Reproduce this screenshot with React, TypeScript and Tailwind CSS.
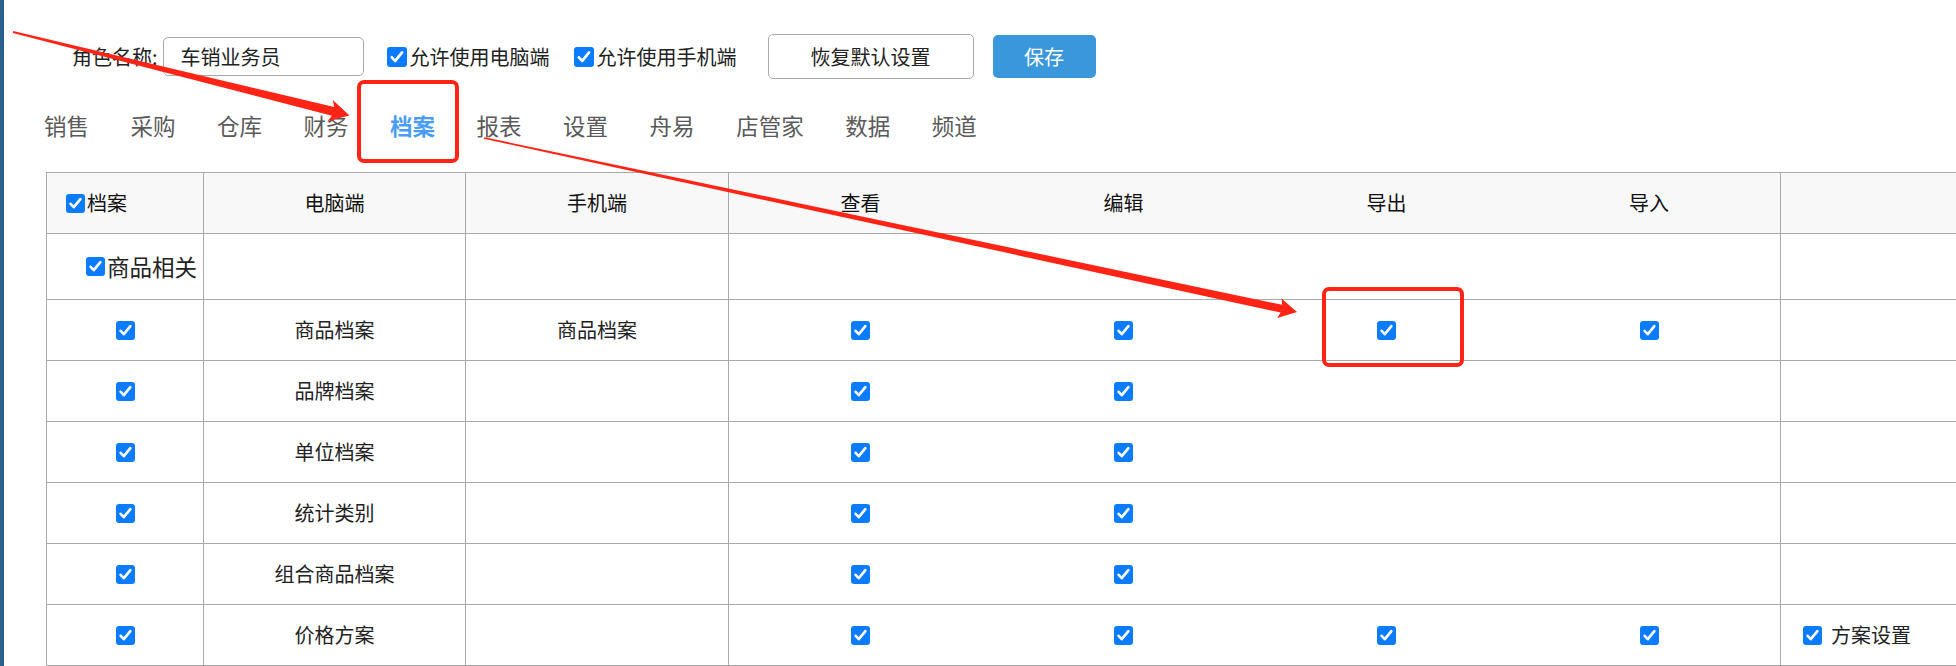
import React from 'react';

const font = "font-['Noto_Sans_CJK_SC','Microsoft_YaHei',sans-serif]";

function Check({ size = 19 }: { size?: number }) {
  return (
    <span
      className={`inline-flex shrink-0 items-center justify-center rounded-[3px] bg-[#0b7bff] ${
        size === 20 ? 'h-[20px] w-[20px]' : 'h-[19px] w-[19px]'
      }`}
    >
      <svg viewBox="0 0 19 19" className="h-full w-full" fill="none">
        <path d="M4.6 9.8 L7.8 13.2 L14.4 5.2" stroke="white" strokeWidth="2.6" strokeLinecap="round" strokeLinejoin="round" />
      </svg>
    </span>
  );
}

const tabs = ['销售', '采购', '仓库', '财务', '档案', '报表', '设置', '舟易', '店管家', '数据', '频道'];

const rows = [
  { name: '商品档案', mobile: '商品档案', exp: true, imp: true },
  { name: '品牌档案' },
  { name: '单位档案' },
  { name: '统计类别' },
  { name: '组合商品档案' },
  { name: '价格方案', exp: true, imp: true, extra: '方案设置' },
] as { name: string; mobile?: string; exp?: boolean; imp?: boolean; extra?: string }[];

const cols = 'grid grid-cols-[157px_262px_263px_263px_263px_263px_263px_260px]';

export default function App() {
  return (
    <div className={`relative flex h-[666px] w-[1956px] overflow-hidden bg-white text-[#222] ${font}`}>
      {/* left strip */}
      <div className="w-[4px] shrink-0 bg-[#2c5f8e]" />

      <div className="flex min-w-0 flex-1 flex-col">
        {/* role bar */}
        <div className="mt-[34px] flex h-[45px] items-center pl-[68px] text-[20px]">
          <span className="leading-none">角色名称:</span>
          <div className="ml-[5px] flex h-[39px] w-[201px] items-center rounded-[5px] border border-[#a9a9a9] pl-[17px]">
            车销业务员
          </div>
          <label className="ml-[23px] flex items-center gap-[3px]">
            <Check size={20} />
            <span>允许使用电脑端</span>
          </label>
          <label className="ml-[24px] flex items-center gap-[3px]">
            <Check size={20} />
            <span>允许使用手机端</span>
          </label>
          <button className="ml-[31px] flex h-[45px] w-[206px] items-center justify-center rounded-[5px] border border-[#a9a9a9] bg-white">
            恢复默认设置
          </button>
          <button className="ml-[19px] flex h-[43px] w-[103px] items-center justify-center rounded-[5px] bg-[#3a97dc] text-white">
            保存
          </button>
        </div>

        {/* module tabs */}
        <div className="mt-[24px] flex h-[46px] items-center gap-[41.5px] pl-[40px] text-[22.5px] text-[#5a5a5a]">
          {tabs.map((t) => (
            <span key={t} className={t === '档案' ? 'font-bold text-[#4a9df5]' : ''}>
              {t}
            </span>
          ))}
        </div>

        {/* permission table */}
        <div className="ml-[42px] mt-[23px] w-[2004px] border-l border-t border-[#a9a9a9] text-[20px]">
          <div className={`${cols} h-[61px] border-b border-[#a9a9a9] bg-[#f8f8f8] text-[#111]`}>
            <div className="flex items-center gap-[2px] border-r border-[#a9a9a9] pl-[19px]">
              <Check />
              <span>档案</span>
            </div>
            <div className="flex items-center justify-center border-r border-[#a9a9a9]">电脑端</div>
            <div className="flex items-center justify-center border-r border-[#a9a9a9]">手机端</div>
            <div className="flex items-center justify-center">查看</div>
            <div className="flex items-center justify-center">编辑</div>
            <div className="flex items-center justify-center">导出</div>
            <div className="flex items-center justify-center border-r border-[#a9a9a9]">导入</div>
            <div />
          </div>

          <div className={`${cols} h-[66px] border-b border-[#a9a9a9]`}>
            <div className="flex items-center gap-[2px] border-r border-[#a9a9a9] pl-[39px] text-[22.5px]">
              <Check />
              <span className="whitespace-nowrap">商品相关</span>
            </div>
            <div className="border-r border-[#a9a9a9]" />
            <div className="border-r border-[#a9a9a9]" />
            <div className="col-span-4 border-r border-[#a9a9a9]" />
            <div />
          </div>

          {rows.map((r) => (
            <div key={r.name} className={`${cols} h-[61px] border-b border-[#a9a9a9]`}>
              <div className="flex items-center justify-center border-r border-[#a9a9a9]">
                <Check />
              </div>
              <div className="flex items-center justify-center border-r border-[#a9a9a9]">{r.name}</div>
              <div className="flex items-center justify-center border-r border-[#a9a9a9]">{r.mobile}</div>
              <div className="flex items-center justify-center">
                <Check />
              </div>
              <div className="flex items-center justify-center">
                <Check />
              </div>
              <div className="flex items-center justify-center">{r.exp && <Check />}</div>
              <div className="flex items-center justify-center border-r border-[#a9a9a9]">{r.imp && <Check />}</div>
              <div className="flex items-center gap-[9px] pl-[22px]">
                {r.extra && (
                  <>
                    <Check />
                    <span>{r.extra}</span>
                  </>
                )}
              </div>
            </div>
          ))}
        </div>
      </div>

      {/* red annotation overlay */}
      <svg className="pointer-events-none absolute left-0 top-0 h-[666px] w-[1956px]" viewBox="0 0 1956 666">
        <polygon
          fill="#ff2415"
          points="13.2,31 334.1,106.9 332.8,99.9 349.5,115.4 327.5,121.3 331.9,115.7 12.8,33"
        />
        <polygon
          fill="#ff2415"
          points="484.2,137.2 1282.2,304.8 1281.5,298.5 1297,312 1277.3,318.1 1280.6,312.6 483.8,138.8"
        />
        <rect x="359" y="82" width="98" height="79" rx="5" fill="none" stroke="#ff2415" strokeWidth="4" />
        <rect x="1324" y="289" width="138" height="76" rx="5" fill="none" stroke="#ff2415" strokeWidth="4" />
      </svg>
    </div>
  );
}
